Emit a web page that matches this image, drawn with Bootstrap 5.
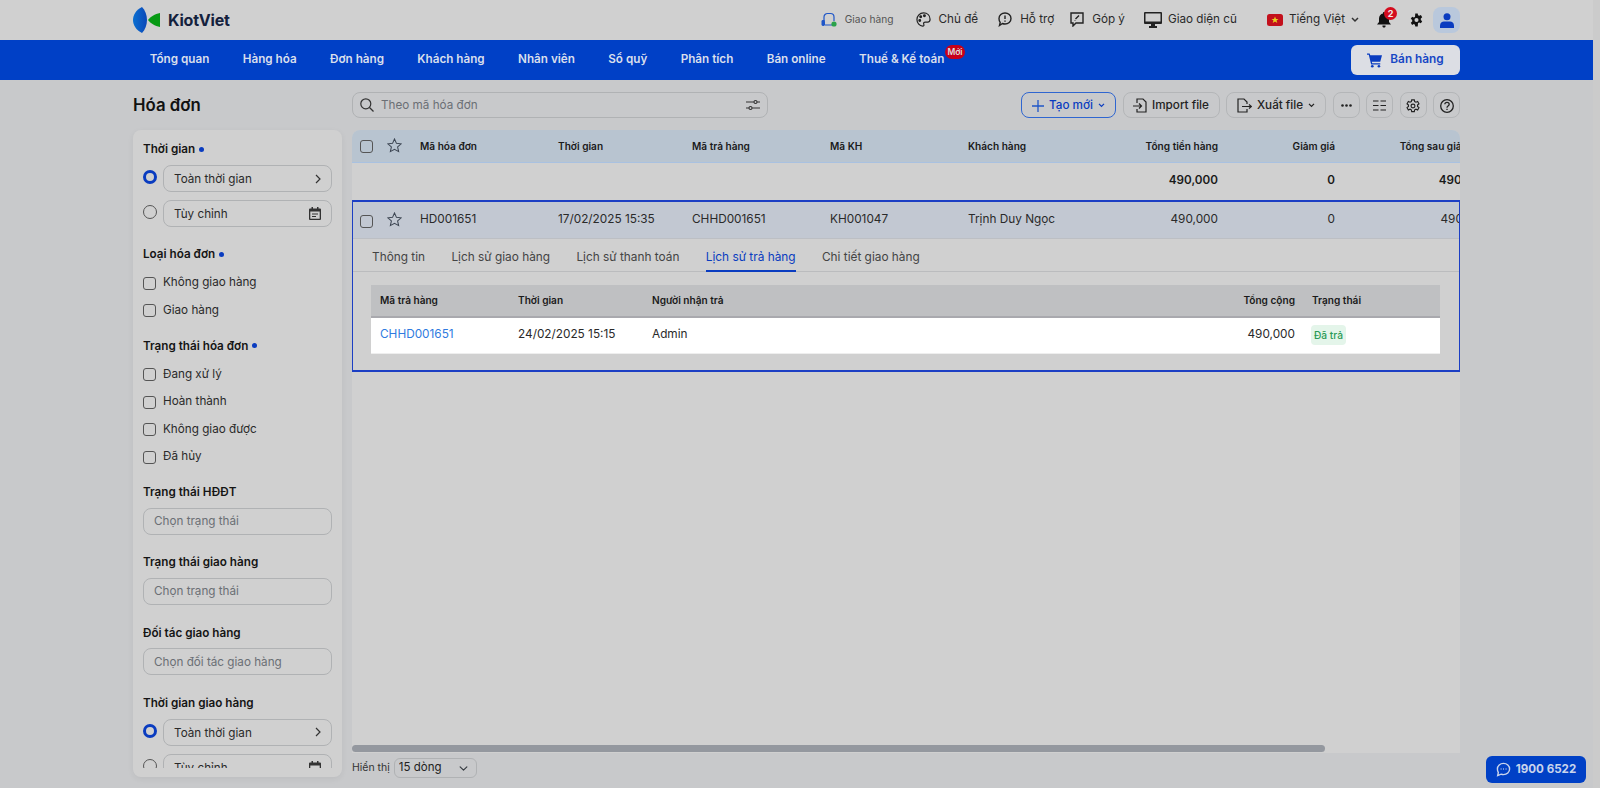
<!doctype html>
<html lang="vi"><head><meta charset="utf-8"><title>Hóa đơn</title>
<link href="https://cdn.jsdelivr.net/npm/bootstrap@5.3.0/dist/css/bootstrap.min.css" rel="stylesheet">
<style>
html,body{height:100%;overflow:hidden}
body{background:#c8c9cb;font-family:Inter,"Noto Sans",sans-serif;font-size:11.8px;color:#222;display:flex}
svg{display:block;flex:none}
.page{width:1593px;flex:none;height:788px;overflow:hidden}
.gutter{flex:1;background:#cbcbcb}
.topbar{height:40px;background:#d0d0d0;padding:0 133px;display:flex;align-items:center}
.brand{font-size:16px;font-weight:700;color:#14213d;margin-left:8px;line-height:1;letter-spacing:-.2px}
.tb{display:flex;align-items:center;gap:8px;color:#2a2a2a;font-size:11.7px;white-space:nowrap}
.tb-tight{gap:6px}
.tb-small{font-size:10.2px;color:#555;margin-right:22px}
.m16{margin-left:16px}.m18{margin-left:18px}.m19{margin-left:19px}.m20{margin-left:20px}.m30{margin-left:30px}.m10{margin-left:10px}
.avatar{width:27px;height:26px;background:#b9c8dc;border-radius:8px;display:flex;align-items:center;justify-content:center}
.bellwrap{position:relative;width:14px}
.bellcount{position:absolute;left:7px;top:-5px;width:13px;height:13px;border-radius:50%;background:#d40d1e;color:#eee;font-size:9px;font-weight:700;line-height:13px;text-align:center}
.mainnav{height:40px;background:#0040c6;padding:0 133px;display:flex;align-items:center;flex-wrap:nowrap}
.mainnav .nav-link{color:#d9dfec;font-size:11.7px;font-weight:600;padding:0 16.7px;white-space:nowrap;position:relative}
.newtag{position:absolute;right:-4px;top:-6px;height:14px;width:20px;background:#c8001a;border-radius:8px;color:#ddd;font-size:8.5px;line-height:14px;text-align:center;font-weight:600}
.sellbtn{margin-left:auto;width:109px;height:30px;padding:0;background:#dcdee4;border:0;border-radius:6px;color:#1646c4;font-size:11.8px;font-weight:600;display:flex;align-items:center;justify-content:center;gap:8px}
.content{padding:12px 133px 0 133px;display:flex;gap:10px}
.side-col{width:209px;flex:none}
.main-col{flex:1;min-width:0}
.pagetitle{height:26px;font-size:16.8px;font-weight:600;line-height:26px;color:#111;margin:0 0 12px}
.sidebar{height:647px;background:#d0d0d0;border-radius:8px;box-shadow:0 2px 6px rgba(0,0,0,.06);padding:10px 10px 9px 10px}
.side-inner{height:628px;overflow:hidden}
.flabel{font-size:11.7px;font-weight:600;color:#151515;line-height:18px;margin-bottom:7px;display:flex;align-items:center;gap:4px}
.fdot{width:5px;height:5px;background:#0a3cc0;border-radius:50%}
.fgroup{margin-bottom:18.9px}
.fgroup .flabel{margin-bottom:6.5px}
.fgroup-t{margin-bottom:10px}
.fgroup-c{margin-bottom:12px}
.fgroup-c .flabel{margin-bottom:6.5px}
.ro{display:flex;gap:6px;margin-bottom:8px}
.form-check-input.rd{width:14px;height:14px;margin:5px 0 0;background:transparent;border:1px solid #555;flex:none}
.form-check-input.rd:checked{background:#d0d0d0;border:3.5px solid #0a3cc0;background-image:none}
.fbox{flex:1;height:27px;border:1px solid #b0b2b4;border-radius:8px;padding:3px 10px 0;font-size:11.7px;color:#2a2a2a;display:flex;align-items:center;justify-content:space-between;background:transparent}
.fbox svg{margin-top:-3px}
.sidebar .form-control{height:27px;min-height:0;background:transparent;border:1px solid #b0b2b4;border-radius:8px;padding:0 10px;font-size:11.7px;color:#222;box-shadow:none}
.form-control::placeholder{color:#6b6f75;opacity:1}
.crow{height:27.5px;display:flex;align-items:center;gap:7px;font-size:11.7px;color:#2a2a2a}
.form-check-input.cb{width:13px;height:13px;margin:0;background:transparent;border:1px solid #555;border-radius:3px;flex:none;display:block}
.toolbar{height:26px;display:flex;align-items:center;gap:6.5px;margin-bottom:12px}
.search{width:416px;height:26px;position:relative;display:flex;align-items:center;gap:7px;border:1px solid #b0b2b4;border-radius:8px;padding:0 7px;margin-right:auto}
.search input{border:0;background:transparent;padding:0;height:24px;font-size:11.7px;flex:1;min-width:0;box-shadow:none}
.tbtn{height:26px;border:1px solid #b4b6b8;border-radius:8px;background:transparent;padding:1px 0 0;display:flex;align-items:center;justify-content:center;gap:5px;font-size:11.7px;font-weight:500;color:#222;white-space:nowrap}
.tbtn-new{width:95px;border-color:#2f66d0;color:#0a3cc0}
.tbtn-imp{width:97px}.tbtn-exp{width:100px}.tbtn-ic{width:27px}
.panel{height:623px;background:#d0d0d0;border-radius:8px 8px 0 0;overflow:hidden;position:relative}
.rgrid{display:grid;grid-template-columns:34px 34px 138px 134px 138px 138px 140px 110px 117px 153px;width:1136px;align-items:center}
.rgrid .r{text-align:right;white-space:nowrap}
.rgrid .ck{padding-left:8px}
.rgrid .st{padding:0 0 2px 1px}
.rhead{height:33px;background:#b8c4d0;border-bottom:1px solid #a9c1e0;font-size:10.1px;font-weight:600;color:#1a1a1a;padding-top:1px}
.rsum{height:37px;font-size:11.7px;font-weight:600;color:#1a1a1a;padding-bottom:1px}
.rsel{height:37px;background:#c2c8d2;margin-left:-1px;border-bottom:1px solid #bcbfc4;font-size:11.8px;color:#2a2a2a}
.rsel .ck{padding-top:3px}
.selframe{border:1px solid #1c3fc4;border-width:2px 1px;height:172px;overflow:hidden}
.dtabs{height:33px;border-bottom:1px solid #bbbcbe;padding-left:19px;gap:26.3px;flex-wrap:nowrap}
.dtabs .nav-link{padding:0;height:33px;line-height:36px;color:#444;font-size:11.85px;white-space:nowrap;border-bottom:1px solid transparent;border-radius:0}
.dtabs .nav-link.active{color:#0a3cc0;border-bottom:2px solid #0a3cc0}
.dbody{padding:13px 18px 0 18px}
.dtable{width:1069px;table-layout:fixed;margin:0;--bs-table-bg:transparent;font-size:11.8px}
.dtable th{background:#bfc0c2;height:32px;padding:0 9px;font-size:10.1px;font-weight:600;color:#1a1a1a;border-bottom:2px solid #a9a9ae;vertical-align:middle}
.dtable td{background:#fff;height:36px;padding:0 9px;color:#2a2a2a;border-bottom:1px solid #eee;vertical-align:middle}
.dtable th:last-child,.dtable td:last-child{padding-left:8px}
.dtable a{color:#2f7be0;text-decoration:none}
.paidtag{display:inline-block;background:#e4f5ea;color:#2a9a55;font-size:10.2px;padding:0 3px;height:20px;line-height:20px;border-radius:4px;margin-left:-1px;font-weight:500}
.hscroll{position:absolute;left:0;right:0;bottom:0;height:8px}
.hthumb{width:973px;height:7px;background:#94989f;border-radius:4px}
.pager{display:flex;align-items:center;gap:4px;margin-top:5px;font-size:10.5px;color:#333}
.pager .form-select{width:83px;height:20px;min-height:0;padding:0 0 0 4px;font-size:11.5px;border:1px solid #b0b2b4;border-radius:6px;background-color:transparent;background-position:right 8px center;background-size:9px;color:#222}
.hotline{position:fixed;left:1486px;top:756px;width:100px;height:27px;background:#0040c6;border:0;border-radius:6px;color:#c9d4ec;font-size:11.6px;font-weight:700;display:flex;align-items:center;justify-content:center;gap:5px;padding:0}
</style></head>
<body>
<div class="page">
<header class="topbar">
<svg width="27" height="26" viewBox="0 0 27 26"><defs><linearGradient id="kv" x1="0" x2="1"><stop offset="0" stop-color="#0a6fd0"/><stop offset="1" stop-color="#0b47b8"/></linearGradient></defs><path d="M9 0C3 3 0 8 0 13s3 10 9 13c3-3 5-8 5-13S12 3 9 0z" fill="url(#kv)"/><path d="M27 6v14c-5-1-10-4-12-7 2-3 7-6 12-7z" fill="#079a14"/></svg>
<span class="brand">KiotViet</span>
<div class="tb tb-small ms-auto"><svg width="16" height="16" viewBox="0 0 16 16" fill="none"><path d="M3 9V5a3.500 3.500 0 0 1 3.500-3.500h3A3.500 3.500 0 0 1 13 5v4M4 13h7" stroke="#1f56c8" stroke-width="1.200"/><rect x=".5" y="8" width="3.500" height="6" rx="1.400" fill="#1f56c8"/><circle cx="13" cy="12" r="2.600" fill="#2aa24a"/></svg>Giao hàng</div>
<div class="tb"><svg width="15" height="15" viewBox="0 0 16 16" fill="none" stroke="#222" stroke-width="1.300"><path d="M8 1C4 1 1 4 1 8s3 7 6 7c1.500 0 1.800-1 1.300-2-.6-1.300.2-2.300 1.700-2.300h2.500c1.700 0 2.500-1 2.500-3C15 3.500 12 1 8 1z"/><circle cx="5" cy="5" r=".9" fill="#222"/><circle cx="9" cy="4" r=".9" fill="#222"/><circle cx="4" cy="9" r=".9" fill="#222"/></svg>Chủ đề</div>
<div class="tb m20"><svg width="14" height="15" viewBox="0 0 14 15" fill="none" stroke="#222" stroke-width="1.400"><path d="M7 1c3.300 0 6 2.300 6 5.500S10.300 12 7 12c-.9 0-1.800-.2-2.600-.5L1.500 13.500l.7-3.100C1.400 9.400 1 8 1 6.500 1 3.300 3.700 1 7 1z"/><path d="M7 3.500v3.500M7 8.500v1.200"/></svg>Hỗ trợ</div>
<div class="tb m16"><svg width="14" height="15" viewBox="0 0 14 15" fill="none" stroke="#222" stroke-width="1.400"><path d="M1 1h12v10H6l-3 3v-3H1z"/><path d="M9 3.500 5.500 7M5 8.500v.5"/></svg>Góp ý</div>
<div class="tb tb-tight m19"><svg width="18" height="16" viewBox="0 0 18 16"><path d="M1 0h16a1 1 0 0 1 1 1v10a1 1 0 0 1-1 1H1a1 1 0 0 1-1-1V1a1 1 0 0 1 1-1z" fill="#222"/><rect x="1.500" y="1.500" width="15" height="8" fill="#d0d0d0"/><path d="M7 12h4v2h2v2H5v-2h2z" fill="#222"/></svg>Giao diện cũ</div>
<div class="tb tb-tight m30"><svg width="16" height="12" viewBox="0 0 16 12"><rect width="16" height="12" rx="2.500" fill="#c3101c"/><path d="m8 2.500 1 2.400 2.500.1-2 1.500.8 2.500L8 7.600 5.700 9l.8-2.500-2-1.500 2.500-.1z" fill="#e8d020"/></svg>Tiếng Việt<svg width="8" height="6" viewBox="0 0 8 6" fill="none" stroke="#333" stroke-width="1.500"><path d="m1 1 3 3 3-3"/></svg></div>
<div class="bellwrap m18"><svg width="14" height="16" viewBox="0 0 14 16" fill="#111"><path d="M7 0c.6 0 1 .4 1 1v.6C10.400 2 12 4 12 6.500V10l2 2.500H0L2 10V6.500C2 4 3.600 2 6 1.600V1c0-.6.4-1 1-1zM5.500 13.500h3A1.500 1.500 0 0 1 7 15.500a1.500 1.500 0 0 1-1.500-2z"/></svg><span class="bellcount">2</span></div>
<svg class="m19" width="13" height="14" viewBox="0 0 16 16" fill="#111"><path d="M6.500 0h3l.4 2.200 1.500.7 2-1 1.600 2.600-1.700 1.500v1.900l1.700 1.500-1.600 2.600-2-1-1.500.7L9.500 16h-3l-.4-2.300-1.500-.7-2 1L1 11.400l1.700-1.500V8L1 6.500l1.600-2.600 2 1 1.500-.7zM8 5.500a2.500 2.500 0 1 0 0 5 2.500 2.500 0 0 0 0-5z" fill-rule="evenodd"/></svg>
<div class="avatar m10"><svg width="14" height="15" viewBox="0 0 14 15" fill="#0a3cc0"><circle cx="7" cy="3.800" r="3.500"/><path d="M0 15v-2.500C0 10 2 8.500 4 8.500h6c2 0 4 1.500 4 4V15z"/></svg></div>
</header>
<nav class="mainnav nav">
<a class="nav-link" href="#">Tổng quan</a><a class="nav-link" href="#">Hàng hóa</a><a class="nav-link" href="#">Đơn hàng</a><a class="nav-link" href="#">Khách hàng</a><a class="nav-link" href="#">Nhân viên</a><a class="nav-link" href="#">Sổ quỹ</a><a class="nav-link" href="#">Phân tích</a><a class="nav-link" href="#">Bán online</a><a class="nav-link" href="#">Thuế &amp; Kế toán<span class="newtag">Mới</span></a>
<button class="btn sellbtn" type="button"><svg width="15" height="15" viewBox="0 0 17 16" fill="#0a3cc0"><path d="M0 0h3l.7 2H17l-2 7.500H5.500l.4 1.500H15v1.500H4.700L2 1.500H0z"/><circle cx="6" cy="14.500" r="1.500"/><circle cx="13.500" cy="14.500" r="1.500"/></svg>Bán hàng</button>
</nav>
<div class="content">
<aside class="side-col">
<h1 class="pagetitle">Hóa đơn</h1>
<div class="sidebar"><div class="side-inner">
<div class="fgroup-t"><div class="flabel">Thời gian <span class="fdot"></span></div>
<div class="ro"><input class="form-check-input rd" type="radio" name="t1" checked><div class="fbox">Toàn thời gian<svg width="6" height="10" viewBox="0 0 6 10" fill="none" stroke="#333" stroke-width="1.200"><path d="m1 1 4 4-4 4"/></svg></div></div>
<div class="ro"><input class="form-check-input rd" type="radio" name="t1"><div class="fbox">Tùy chỉnh<svg width="12" height="13" viewBox="0 0 12 13" fill="#333"><path d="M2.500 0h1.500v1.500h4V0h1.500v1.500H11a1 1 0 0 1 1 1V12a1 1 0 0 1-1 1H1a1 1 0 0 1-1-1V2.500a1 1 0 0 1 1-1h1.500zM1.300 4.500V11.700h9.400V4.500zM3 6.500h6v1H3zM3 9h4v1H3z" fill-rule="evenodd"/></svg></div></div></div>
<div class="fgroup-c pt-2"><div class="flabel">Loại hóa đơn <span class="fdot"></span></div>
<div class="crow"><input class="form-check-input cb" type="checkbox">Không giao hàng</div>
<div class="crow"><input class="form-check-input cb" type="checkbox">Giao hàng</div></div>
<div class="fgroup-c"><div class="flabel">Trạng thái hóa đơn <span class="fdot"></span></div>
<div class="crow"><input class="form-check-input cb" type="checkbox">Đang xử lý</div>
<div class="crow"><input class="form-check-input cb" type="checkbox">Hoàn thành</div>
<div class="crow"><input class="form-check-input cb" type="checkbox">Không giao được</div>
<div class="crow"><input class="form-check-input cb" type="checkbox">Đã hủy</div></div>
<div class="fgroup"><div class="flabel">Trạng thái HĐĐT</div><input class="form-control" placeholder="Chọn trạng thái"></div>
<div class="fgroup"><div class="flabel">Trạng thái giao hàng</div><input class="form-control" placeholder="Chọn trạng thái"></div>
<div class="fgroup"><div class="flabel">Đối tác giao hàng</div><input class="form-control" placeholder="Chọn đối tác giao hàng"></div>
<div class="fgroup"><div class="flabel">Thời gian giao hàng</div>
<div class="ro"><input class="form-check-input rd" type="radio" name="t2" checked><div class="fbox">Toàn thời gian<svg width="6" height="10" viewBox="0 0 6 10" fill="none" stroke="#333" stroke-width="1.200"><path d="m1 1 4 4-4 4"/></svg></div></div>
<div class="ro"><input class="form-check-input rd" type="radio" name="t2"><div class="fbox">Tùy chỉnh<svg width="12" height="13" viewBox="0 0 12 13" fill="#333"><path d="M2.500 0h1.500v1.500h4V0h1.500v1.500H11a1 1 0 0 1 1 1V12a1 1 0 0 1-1 1H1a1 1 0 0 1-1-1V2.500a1 1 0 0 1 1-1h1.500zM1.300 4.500V11.700h9.400V4.500z" fill-rule="evenodd"/></svg></div></div></div>
</div></div>
</aside>
<main class="main-col">
<div class="toolbar">
<div class="search"><svg width="14" height="14" viewBox="0 0 14 14" fill="none" stroke="#333" stroke-width="1.200"><circle cx="5.800" cy="5.800" r="5"/><path d="m9.500 9.500 4 4"/></svg><input class="form-control" placeholder="Theo mã hóa đơn"><svg width="14" height="12" viewBox="0 0 14 12" fill="none" stroke="#333" stroke-width="1.100"><path d="M0 3h8M11 3h3M0 9h3M6 9h8"/><circle cx="9.500" cy="3" r="1.500"/><circle cx="4.500" cy="9" r="1.500"/></svg></div>
<button class="btn tbtn tbtn-new" type="button"><svg width="12" height="12" viewBox="0 0 12 12" stroke="#1f56c8" stroke-width="1.300"><path d="M6 0v12M0 6h12"/></svg>Tạo mới<svg width="7" height="5" viewBox="0 0 8 6" fill="none" stroke="#0a3cc0" stroke-width="1.500"><path d="m1 1 3 3 3-3"/></svg></button>
<button class="btn tbtn tbtn-imp" type="button"><svg width="14" height="15" viewBox="0 0 14 15" fill="none" stroke="#222" stroke-width="1.200"><path d="M4 5V1h6l3 3v10H4v-3M0 8h8M6 5.500 8.500 8 6 10.500"/></svg>Import file</button>
<button class="btn tbtn tbtn-exp" type="button"><svg width="15" height="15" viewBox="0 0 15 15" fill="none" stroke="#222" stroke-width="1.200"><path d="M10 6V4L7 1H1v13h9v-3M5 8.500h9M12 6.500 14.500 8.500 12 10.500"/></svg>Xuất file<svg width="7" height="5" viewBox="0 0 8 6" fill="none" stroke="#222" stroke-width="1.500"><path d="m1 1 3 3 3-3"/></svg></button>
<button class="btn tbtn tbtn-ic" type="button" aria-label="Thêm"><svg width="11" height="3" viewBox="0 0 11 3" fill="#222"><circle cx="1.500" cy="1.500" r="1.300"/><circle cx="5.500" cy="1.500" r="1.300"/><circle cx="9.500" cy="1.500" r="1.300"/></svg></button>
<button class="btn tbtn tbtn-ic" type="button" aria-label="Cột"><svg width="13" height="11" viewBox="0 0 13 11" stroke="#222" stroke-width="1.200"><path d="M0 1h5.500M7.500 1H13M0 5.500h5.500M7.500 5.500H13M0 10h5.500M7.500 10H13"/></svg></button>
<button class="btn tbtn tbtn-ic" type="button" aria-label="Cài đặt"><svg width="14" height="14" viewBox="0 0 16 16" fill="none" stroke="#222" stroke-width="1.300"><path d="M6.500 1h3l.4 2 1.500.7 1.900-.8 1.500 2.600-1.600 1.300v1.800l1.600 1.300-1.500 2.600-1.900-.8-1.500.7-.4 2h-3l-.4-2-1.500-.7-1.900.8-1.500-2.600 1.600-1.300V6.800L1.200 5.500l1.500-2.600 1.900.8 1.500-.7z"/><circle cx="8" cy="8" r="2.200"/></svg></button>
<button class="btn tbtn tbtn-ic" type="button" aria-label="Trợ giúp"><svg width="14" height="14" viewBox="0 0 14 14" fill="none" stroke="#222" stroke-width="1.300"><circle cx="7" cy="7" r="6.300"/><path d="M4.800 5.300C4.900 4 5.900 3.300 7 3.300s2.200.8 2.200 2c0 1.800-2.200 1.700-2.200 3.400M7 9.800v1.300"/></svg></button>
</div>
<div class="panel">
<div class="rgrid rhead">
<div class="ck"><input class="form-check-input cb" type="checkbox"></div>
<div class="st"><svg width="15" height="15" viewBox="0 0 16 16" fill="none" stroke="#3d4653" stroke-width="1.100"><path d="m8 1 2.100 4.700 5 .5-3.800 3.300 1.100 5L8 12l-4.400 2.500 1.100-5L.9 6.200l5-.5z"/></svg></div>
<div>Mã hóa đơn</div><div>Thời gian</div><div>Mã trả hàng</div><div>Mã KH</div><div>Khách hàng</div><div class="r">Tổng tiền hàng</div><div class="r">Giảm giá</div><div class="r">Tổng sau giảm giá</div></div>
<div class="rgrid rsum"><div></div><div></div><div></div><div></div><div></div><div></div><div></div><div class="r">490,000</div><div class="r">0</div><div class="r">490,000</div></div>
<div class="selframe">
<div class="rgrid rsel">
<div class="ck"><input class="form-check-input cb" type="checkbox"></div>
<div class="st"><svg width="15" height="15" viewBox="0 0 16 16" fill="none" stroke="#3d4653" stroke-width="1.100"><path d="m8 1 2.100 4.700 5 .5-3.800 3.300 1.100 5L8 12l-4.400 2.500 1.100-5L.9 6.200l5-.5z"/></svg></div>
<div>HD001651</div><div>17/02/2025 15:35</div><div>CHHD001651</div><div>KH001047</div><div>Trịnh Duy Ngọc</div><div class="r">490,000</div><div class="r">0</div><div class="r">490,000</div></div>
<ul class="nav dtabs">
<li class="nav-item"><a class="nav-link" href="#">Thông tin</a></li>
<li class="nav-item"><a class="nav-link" href="#">Lịch sử giao hàng</a></li>
<li class="nav-item"><a class="nav-link" href="#">Lịch sử thanh toán</a></li>
<li class="nav-item"><a class="nav-link active" href="#">Lịch sử trả hàng</a></li>
<li class="nav-item"><a class="nav-link" href="#">Chi tiết giao hàng</a></li>
</ul>
<div class="dbody">
<table class="table dtable"><colgroup><col style="width:138px"><col style="width:134px"><col><col style="width:110px"><col style="width:136px"></colgroup>
<thead><tr><th>Mã trả hàng</th><th>Thời gian</th><th>Người nhận trả</th><th class="text-end">Tổng cộng</th><th>Trạng thái</th></tr></thead>
<tbody><tr><td><a href="#">CHHD001651</a></td><td>24/02/2025 15:15</td><td>Admin</td><td class="text-end">490,000</td><td><span class="paidtag">Đã trả</span></td></tr></tbody></table>
</div></div>
<div class="hscroll"><div class="hthumb"></div></div>
</div>
<div class="pager"><span>Hiển thị</span><select class="form-select" aria-label="Số dòng"><option>15 dòng</option></select></div>
</main>
</div>
</div>
<div class="gutter"></div>
<button class="btn hotline" type="button"><svg width="15" height="15" viewBox="0 0 16 16" fill="none" stroke="#c9d4ec" stroke-width="1.500"><path d="M8 1.500c3.600 0 6.500 2.600 6.500 6s-2.900 6-6.500 6c-1 0-1.800-.2-2.600-.5L1.800 14.500l.7-3.300C1.800 10.100 1.500 8.800 1.500 7.500c0-3.400 2.900-6 6.500-6z"/><path d="M5 7.500h.8M7.700 7.500h.8M10.300 7.500h.8"/></svg>1900 6522</button>
</body></html>
